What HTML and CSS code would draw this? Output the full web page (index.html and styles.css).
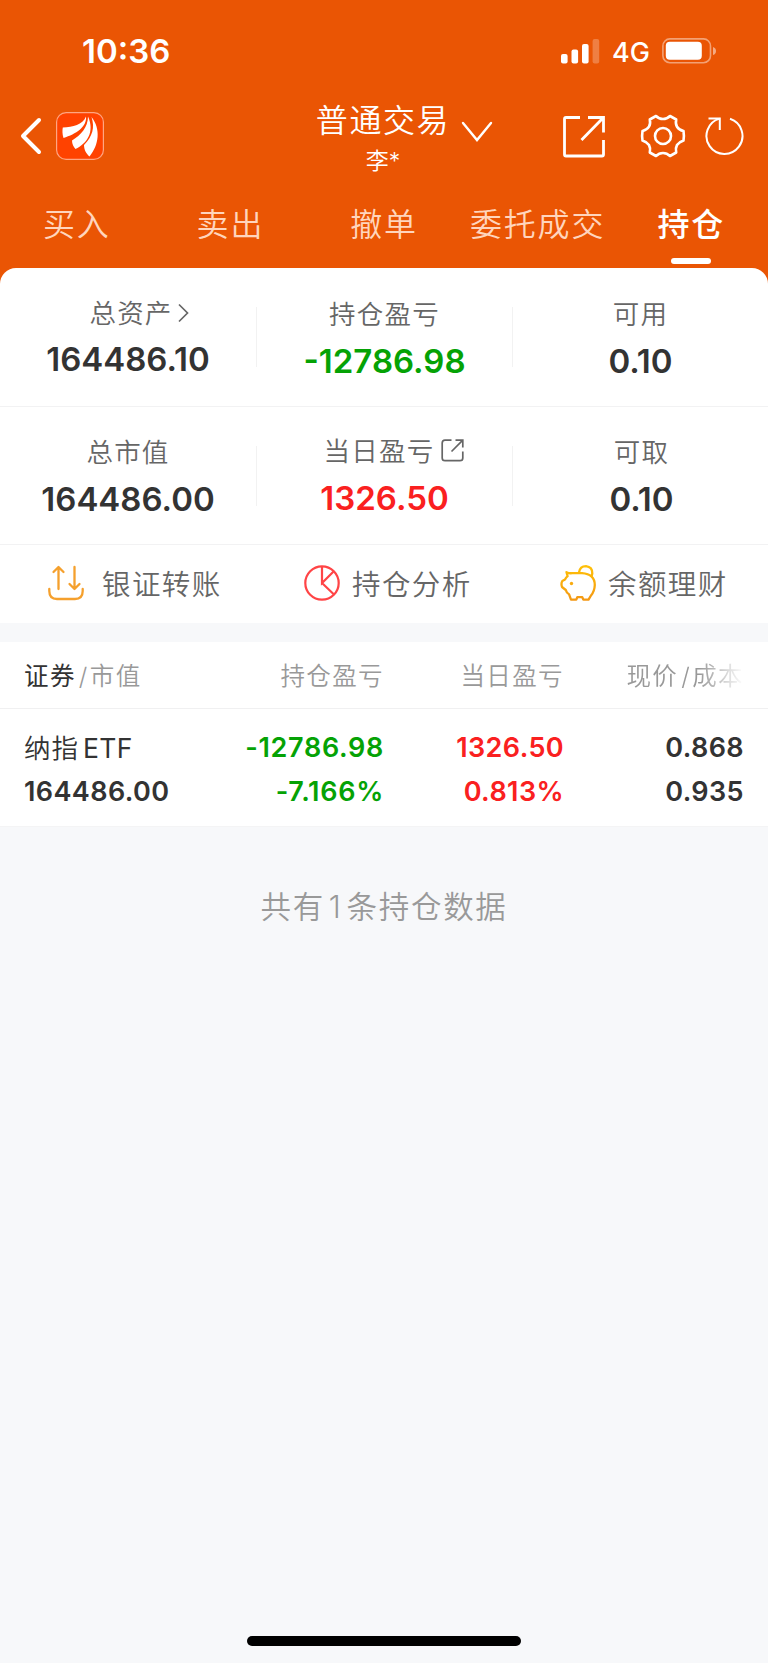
FILE: index.html
```html
<!DOCTYPE html>
<html lang="zh-CN">
  <head>
    <meta charset="utf-8" />
    <title>持仓</title>
    <link rel="stylesheet" href="styles.css">
  </head>
  <body>
    <header class="header">
      <div class="status">
        <span class="clock">10:36</span>
        <div class="status-right">
          <svg class="signal" width="39" height="25" viewBox="0 0 39 25" fill="#fff">
            <rect x="0" y="15" width="6.6" height="9.5" rx="2" />
            <rect x="10.5" y="10.5" width="6.6" height="14" rx="2" />
            <rect x="21" y="5" width="6.6" height="19.5" rx="2" />
            <rect x="31.6" y="0" width="6.6" height="24.5" rx="2" opacity="0.25" />
          </svg>
          <span class="network">4G</span>
          <svg class="battery" width="55" height="26" viewBox="0 0 55 26">
            <rect x="0.9" y="0.9" width="47.6" height="23.8" rx="7" fill="none" stroke="#fff" stroke-width="1.6" opacity="0.45" />
            <rect x="3.8" y="3.8" width="36" height="18" rx="4" fill="#fff" />
            <path d="M51 9 Q54 10 54 13 Q54 16 51 17Z" fill="#fff" opacity="0.5" />
          </svg>
        </div>
      </div>

      <div class="nav">
        <div class="nav-left">
          <svg width="22" height="38" viewBox="0 0 22 38" fill="none" stroke="#fff" stroke-width="4" stroke-linecap="round" stroke-linejoin="round">
            <path d="M19 3 L3 19 L19 35" />
          </svg>
          <svg class="logo" width="48" height="48" viewBox="0 0 48 48">
            <rect x="0.6" y="0.6" width="46.8" height="46.8" rx="9.5" fill="#ff4200" stroke="#ffa582" stroke-width="1.2" />
            <g fill="#fff">
              <path d="M6.8 15.5 C17 15 26.5 13 30 4.5 C31 15 20 22 7.5 26 C6.3 22 6.2 19 6.8 15.5Z" />
              <path d="M32 4.5 C32 15 25 23 16 28.5 C16 32 17.5 35 19.5 37 C31 31.5 39 20 32 4.5Z" />
              <path d="M35.5 5 C39 16 36.5 24 28 33 C28 38 30.5 42 33.5 44.5 C43 33 45 17 35.5 5Z" />
            </g>
          </svg>
        </div>
        <div class="nav-title">
          <div class="title">普通交易</div>
          <div class="user">李*</div>
        </div>
        <div class="nav-right">
          <svg class="chevron" width="32" height="22" viewBox="0 0 32 22" fill="none" stroke="#fff" stroke-width="2.4" stroke-linecap="round">
            <path d="M2 2 L16 19 L30 2" />
          </svg>
          <svg class="share" width="44" height="44" viewBox="0 0 44 44" fill="none" stroke="#fff" stroke-width="2.8">
            <path d="M18 2.5 H4 Q2.5 2.5 2.5 4 V39.5 Q2.5 41 4 41 H40 Q41.5 41 41.5 39.5 V25" />
            <path d="M26 2.5 H41.5 V17.5 M40.5 3.5 L19.5 25" />
          </svg>
          <svg class="gear" width="46" height="44" viewBox="0 0 46 44" fill="none" stroke="#fff" stroke-width="2.6" stroke-linejoin="round">
            <path d="M16 2 Q19 5 23 5 Q27 5 30 2 L36.2 5.5 Q35.3 10 37 12.7 Q39 16 43.5 17 Q44.3 22 43.5 26.500 Q39 28 37 31 Q35.3 34 36.2 38.5 L30 42 Q27 39 23 39 Q19 39 16 42 L9.800 38.5 Q10.700 34 9 31 Q7 28 2.500 26.5 Q1.700 22 2.500 17 Q7 16 9 12.700 Q10.700 10 9.800 5.500 Z" />
            <circle cx="23" cy="22" r="8" />
          </svg>
          <svg width="40" height="40" viewBox="0 0 40 40" fill="none" stroke="#fff" stroke-width="2">
            <path d="M25 2.8 A18 18 0 1 1 14.6 2.6" />
            <path d="M3.5 2.6 H14.8 V14" />
          </svg>
        </div>
      </div>

      <nav class="tabs">
        <span class="tab">买入</span>
        <span class="tab">卖出</span>
        <span class="tab">撤单</span>
        <span class="tab">委托成交</span>
        <span class="tab active">持仓</span>
      </nav>
    </header>

    <section class="assets">
      <div class="asset-row">
        <div class="asset total">
          <div class="label">
            总资产
            <svg width="11" height="20" viewBox="0 0 11 20" fill="none" stroke="#666" stroke-width="1.7"><path d="M1 1.5 L9.5 10 L1 18.5" /></svg>
          </div>
          <div class="amount">164486.10</div>
        </div>
        <div class="asset">
          <div class="label">持仓盈亏</div>
          <div class="amount down">-12786.98</div>
        </div>
        <div class="asset">
          <div class="label">可用</div>
          <div class="amount">0.10</div>
        </div>
      </div>
      <div class="asset-row">
        <div class="asset">
          <div class="label">总市值</div>
          <div class="amount">164486.00</div>
        </div>
        <div class="asset today">
          <div class="label">
            当日盈亏
            <svg width="23" height="23" viewBox="0 0 23 23" fill="none" stroke="#666" stroke-width="1.7">
              <path d="M10.5 1.2 H4 Q1.2 1.2 1.2 4 V19 Q1.2 21.7 4 21.7 H19 Q21.8 21.7 21.8 19 V12.5" />
              <path d="M14.5 1.2 H21.8 V8.5 M21.3 1.7 L10.5 12.5" />
            </svg>
          </div>
          <div class="amount up">1326.50</div>
        </div>
        <div class="asset withdraw">
          <div class="label">可取</div>
          <div class="amount">0.10</div>
        </div>
      </div>
    </section>

    <section class="actions">
      <div class="action transfer">
        <svg width="36" height="36" viewBox="0 0 36 36" fill="none" stroke="#f5a02d" stroke-width="2.3" stroke-linecap="round" stroke-linejoin="round">
          <path d="M1.3 24 V26 Q1.3 34 9 34 H27 Q34.7 34 34.7 26 V24" />
          <path d="M10.5 24 V2.5 M5.5 7 L10.5 2 L15.5 7" />
          <path d="M26.5 2 V23.5 M21.5 19 L26.5 24 L31.5 19" />
        </svg>
        <span>银证转账</span>
      </div>
      <div class="action">
        <svg width="36" height="36" viewBox="0 0 36 36" fill="none" stroke="#ff4446" stroke-width="2.2">
          <circle cx="18" cy="18" r="16.7" />
          <path d="M18 1.2 V18 L29.8 6.2 M18 18 L30 29.5" />
        </svg>
        <span>持仓分析</span>
      </div>
      <div class="action">
        <svg width="36" height="36" viewBox="0 0 36 36" fill="none" stroke="url(#gold)" stroke-width="2.3" stroke-linejoin="round">
          <defs>
            <linearGradient id="gold" x1="0" y1="0" x2="0" y2="36" gradientUnits="userSpaceOnUse">
              <stop offset="0" stop-color="#ffc107" />
              <stop offset="1" stop-color="#f39714" />
            </linearGradient>
          </defs>
          <path d="M6.5 7.2 Q9 8.5 12 8.2 H22 Q34.600 9 34.8 20 Q34.5 26.5 31 30.5 L28.500 34.6 H23.300 L22.300 32.2 H17.3 L16.3 34.6 H11 L9 29.2 Q6.5 28 5.800 25 L2 22 Q0.8 18.500 2.3 16 L5 14.6 Q6 12.5 7.6 11.2 Z" />
          <path d="M19 7.5 Q20 1.2 26 1.2 Q32.5 2 32.3 8.5 Q32 10.5 31 12" />
          <circle cx="11.5" cy="18.5" r="1.7" fill="#f9ab10" stroke="none" />
        </svg>
        <span>余额理财</span>
      </div>
    </section>

    <section class="holdings">
      <div class="cols head">
        <div><b>证券</b><i>/</i>市值</div>
        <div>持仓盈亏</div>
        <div>当日盈亏</div>
        <div class="fade">现价<i>/</i>成本</div>
      </div>
      <div class="cols holding">
        <div><span class="name">纳指<span class="code">ETF</span></span><span>164486.00</span></div>
        <div class="down"><span>-12786.98</span><span>-7.166%</span></div>
        <div class="up"><span>1326.50</span><span>0.813%</span></div>
        <div><span>0.868</span><span>0.935</span></div>
      </div>
    </section>

    <p class="summary">共有<span class="count">1</span>条持仓数据</p>
    <div class="home-bar"></div>
  </body>
</html>
```
FILE: styles.css
```css
* {
  box-sizing: border-box;
}
body {
  margin: 0;
  min-height: 1663px;
  display: flex;
  flex-direction: column;
  background-color: #f7f8fa;
  color: #333;
  font-family: Inter, "Noto Sans CJK SC", sans-serif;
  font-weight: 350;
}
svg {
  display: block;
  flex: none;
}
.header {
  height: 288px;
  background-color: #ea5504;
  color: white;
}
.status {
  height: 100px;
  padding: 2px 51px 0 82px;
  display: flex;
  justify-content: space-between;
  align-items: center;
}
.clock {
  font-size: 33px;
  font-weight: 600;
}
.status-right {
  display: flex;
  align-items: center;
}
.network {
  margin: 3px 12px 0 12px;
  font-size: 27px;
  font-weight: 500;
  line-height: 26px;
}
.nav {
  height: 80px;
  padding: 0 23px 0 20px;
  display: grid;
  grid-template-columns: 1fr 136px 1fr;
}
.nav-left {
  display: flex;
  align-items: center;
  gap: 14px;
  height: 72px;
}
.nav-title {
  padding: 1px 0 0 1px;
  text-align: center;
  white-space: nowrap;
}
.title {
  height: 40px;
  line-height: 40px;
  font-size: 32px;
  letter-spacing: 1.6px;
}
.user {
  height: 40px;
  line-height: 40px;
  font-size: 23px;
}
.nav-right {
  height: 72px;
  display: flex;
  align-items: center;
  justify-content: flex-end;
}
.chevron {
  margin: 0 auto 8px 10px;
}
.share {
  margin: 2px 34px 0 0;
}
.gear {
  margin-right: 19px;
}
.tabs {
  height: 88px;
  padding-top: 1px;
  display: grid;
  grid-template-columns: repeat(5, 1fr);
  text-align: center;
}
.tab {
  display: flex;
  flex-direction: column;
  align-items: center;
  line-height: 88px;
  font-size: 32px;
  letter-spacing: 1.8px;
  color: #ffd5bd;
}
.tab.active {
  color: white;
  font-weight: 500;
}
.tab.active::after {
  content: "";
  width: 40px;
  height: 6px;
  margin-top: -11px;
  border-radius: 3px;
  background-color: white;
}
.assets {
  margin-top: -20px;
  background-color: white;
  border-radius: 16px 16px 0 0;
}
.asset-row {
  height: 139px;
  display: grid;
  grid-template-columns: repeat(3, 1fr);
  align-items: center;
  border-bottom: 1px solid #f2f2f3;
}
.asset-row + .asset-row {
  height: 138px;
}
.asset {
  height: 60px;
  padding-top: 2px;
  display: flex;
  flex-direction: column;
  align-items: center;
  justify-content: center;
}
.asset + .asset {
  border-left: 1px solid #f2f2f2;
}
.label {
  height: 36px;
  display: flex;
  align-items: center;
  gap: 5px;
  line-height: 36px;
  font-size: 26.5px;
  letter-spacing: 1.2px;
  color: #666;
}
.amount {
  margin-top: 9px;
  line-height: 40px;
  font-size: 33px;
  font-weight: 600;
}
.total,
.today {
  padding: 0 0 1px;
}
.total .label {
  padding-left: 22px;
}
.total .amount {
  margin-top: 8px;
}
.today .label {
  gap: 7px;
  padding-left: 19px;
}
.withdraw {
  padding-left: 2px;
}
.down {
  color: #05a205;
}
.up {
  color: #fa2020;
}
.actions {
  height: 78px;
  padding-bottom: 3px;
  display: grid;
  grid-template-columns: repeat(3, 1fr);
  background-color: white;
}
.action {
  padding-left: 48px;
  display: flex;
  align-items: center;
  gap: 12px;
  font-size: 28.5px;
  letter-spacing: 1.4px;
  color: #666;
}
.transfer {
  gap: 18px;
}
.holdings {
  margin-top: 19px;
  background-color: white;
  border-bottom: 1px solid #f4f4f5;
}
.cols {
  padding: 0 24px;
  display: grid;
  grid-template-columns: 180px 180px 180px 180px;
  text-align: right;
}
.cols > :first-child {
  text-align: left;
}
.head {
  height: 67px;
  line-height: 68px;
  font-size: 24.5px;
  letter-spacing: 1.4px;
  color: #999;
  border-bottom: 1px solid #f0f0f1;
}
.head b {
  font-weight: 400;
  color: #333;
}
.head i {
  margin: 0 1px 0 3px;
  font-style: normal;
}
.fade {
  -webkit-mask-image: linear-gradient(to right, #000 75%, transparent);
  mask-image: linear-gradient(to right, #000 75%, transparent);
}
.holding {
  padding-top: 17px;
  height: 117px;
  font-size: 27px;
  font-weight: 600;
  letter-spacing: 0.4px;
}
.holding .down {
  letter-spacing: 0.7px;
}
.holding > div {
  display: flex;
  flex-direction: column;
}
.holding span {
  line-height: 44px;
}
.holding .name {
  height: 44px;
  font-weight: 350;
  font-size: 26.5px;
  letter-spacing: 1px;
}
.code {
  margin-left: 4px;
  font-size: 26.5px;
  font-weight: 400;
  letter-spacing: 0.3px;
}
.summary {
  margin: 56px 0 0;
  text-align: center;
  line-height: 48px;
  font-size: 30.5px;
  letter-spacing: 1.7px;
  color: #999;
}
.count {
  margin: 0 4px;
}
.home-bar {
  width: 274px;
  height: 10px;
  margin: auto auto 17px;
  border-radius: 5px;
  background-color: black;
}
```
